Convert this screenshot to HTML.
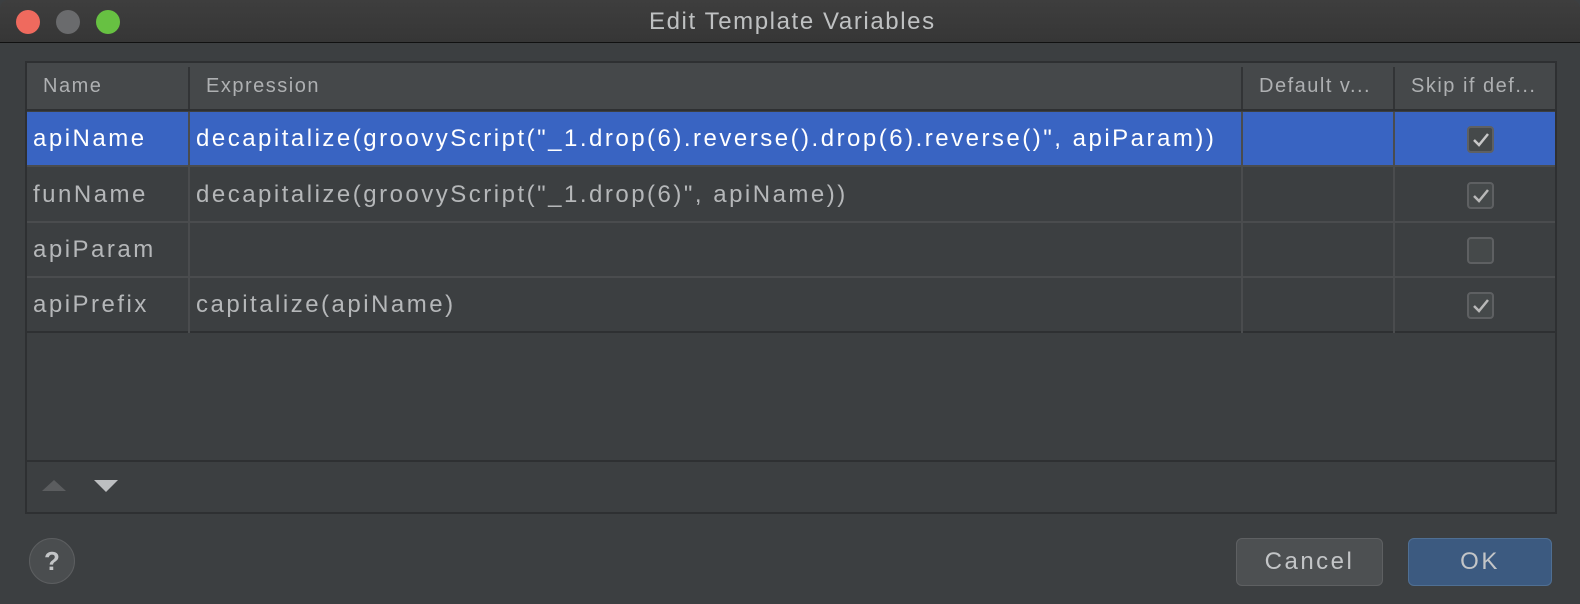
<!DOCTYPE html>
<html><head><meta charset="utf-8"><style>
*{margin:0;padding:0;box-sizing:border-box}
body{width:1580px;height:604px;background:#3c3f41;font-family:"Liberation Sans",sans-serif;position:relative;overflow:hidden}
.title{position:absolute;left:0;top:0;width:1580px;height:43px;background:linear-gradient(#3e3e3e,#363636);border-bottom:1px solid #111;border-radius:8px 8px 0 0}
.title span{position:absolute;left:649px;top:8px;font-size:24px;color:#bfc1c2;letter-spacing:1.6px}
.dot{position:absolute;top:10px;width:24px;height:24px;border-radius:50%}
.table{position:absolute;left:25px;top:61px;width:1532px;height:453px;border:2px solid #2e3032;background:#3c3f41}
.hdr{position:absolute;left:0;top:0;width:1528px;height:48px;background:#45484a;border-bottom:2px solid #2e3032}
.h{position:absolute;top:12px;font-size:20px;color:#aeb0b2;letter-spacing:1.5px}
.vd{position:absolute;width:2px;background:#323436}
.row{position:absolute;left:0;width:1528px;height:55px;border-bottom:2px solid #4a4c4e}
.c{position:absolute;top:13px;font-size:24px;color:#b5b7b9;letter-spacing:2.5px;white-space:nowrap}
.sel{background:#3964c2}
.sel .c{color:#fff}
.cb{position:absolute;left:1440px;top:14px;width:27px;height:27px;border:2px solid #5e6062;border-radius:4px;background:#45494a}
.cb svg{position:absolute;left:3px;top:3px}
.bar{position:absolute;left:0;top:397px;width:1528px;height:2px;background:#2e3032}
.btn{position:absolute;top:538px;height:48px;border-radius:6px;font-size:24px;color:#c3c5c7;text-align:center;line-height:46px;letter-spacing:2.5px}
</style></head><body>
<div class="title">
<div class="dot" style="left:16px;background:#ef6a5e"></div>
<div class="dot" style="left:56px;background:#6a6b6d"></div>
<div class="dot" style="left:96px;background:#67c142"></div>
<span>Edit Template Variables</span></div>
<div class="table">
<div class="hdr">
<div class="h" style="left:16px">Name</div>
<div class="h" style="left:179px">Expression</div>
<div class="h" style="left:1232px">Default v...</div>
<div class="h" style="left:1384px">Skip if def...</div>
</div>
<div class="row sel" style="top:49px"><div class="c" style="left:6px">apiName</div><div class="c" style="left:169px">decapitalize(groovyScript("_1.drop(6).reverse().drop(6).reverse()", apiParam))</div><div class="cb"><svg width="18" height="18"><path d="M2 9 L7 14 L16 3" stroke="#c8c8c8" stroke-width="2.5" fill="none"/></svg></div></div>
<div class="row" style="top:105px"><div class="c" style="left:6px">funName</div><div class="c" style="left:169px">decapitalize(groovyScript("_1.drop(6)", apiName))</div><div class="cb"><svg width="18" height="18"><path d="M2 9 L7 14 L16 3" stroke="#b8b8b8" stroke-width="2.5" fill="none"/></svg></div></div>
<div class="row" style="top:160px"><div class="c" style="left:6px">apiParam</div><div class="cb"></div></div>
<div class="row" style="top:215px;border-bottom-color:#2e3032"><div class="c" style="left:6px">apiPrefix</div><div class="c" style="left:169px">capitalize(apiName)</div><div class="cb"><svg width="18" height="18"><path d="M2 9 L7 14 L16 3" stroke="#b8b8b8" stroke-width="2.5" fill="none"/></svg></div></div>
<div class="vd" style="left:161px;top:4px;height:42px"></div>
<div class="vd" style="left:1214px;top:4px;height:42px"></div>
<div class="vd" style="left:1366px;top:4px;height:42px"></div>
<div class="vd" style="left:161px;top:49px;height:221px;background:#4a4c4e"></div>
<div class="vd" style="left:1214px;top:49px;height:221px;background:#4a4c4e"></div>
<div class="vd" style="left:1366px;top:49px;height:221px;background:#4a4c4e"></div>
<div class="bar"></div>
<svg style="position:absolute;left:13px;top:416px" width="90" height="16"><path d="M2 12 L14 1 L26 12Z" fill="#5b5d5f"/><path d="M54 1 L78 1 L66 13Z" fill="#bdbfc1"/></svg>
</div>
<div style="position:absolute;left:29px;top:538px;width:46px;height:46px;border-radius:50%;background:#4a4d4f;border:1px solid #5c5e60;color:#c3c5c7;font-size:26px;font-weight:bold;text-align:center;line-height:44px">?</div>
<div class="btn" style="left:1236px;width:147px;background:#4d5052;border:1px solid #5e6062">Cancel</div>
<div class="btn" style="left:1408px;width:144px;background:#3c5a80;border:1px solid #4f6f93">OK</div>
</body></html>
